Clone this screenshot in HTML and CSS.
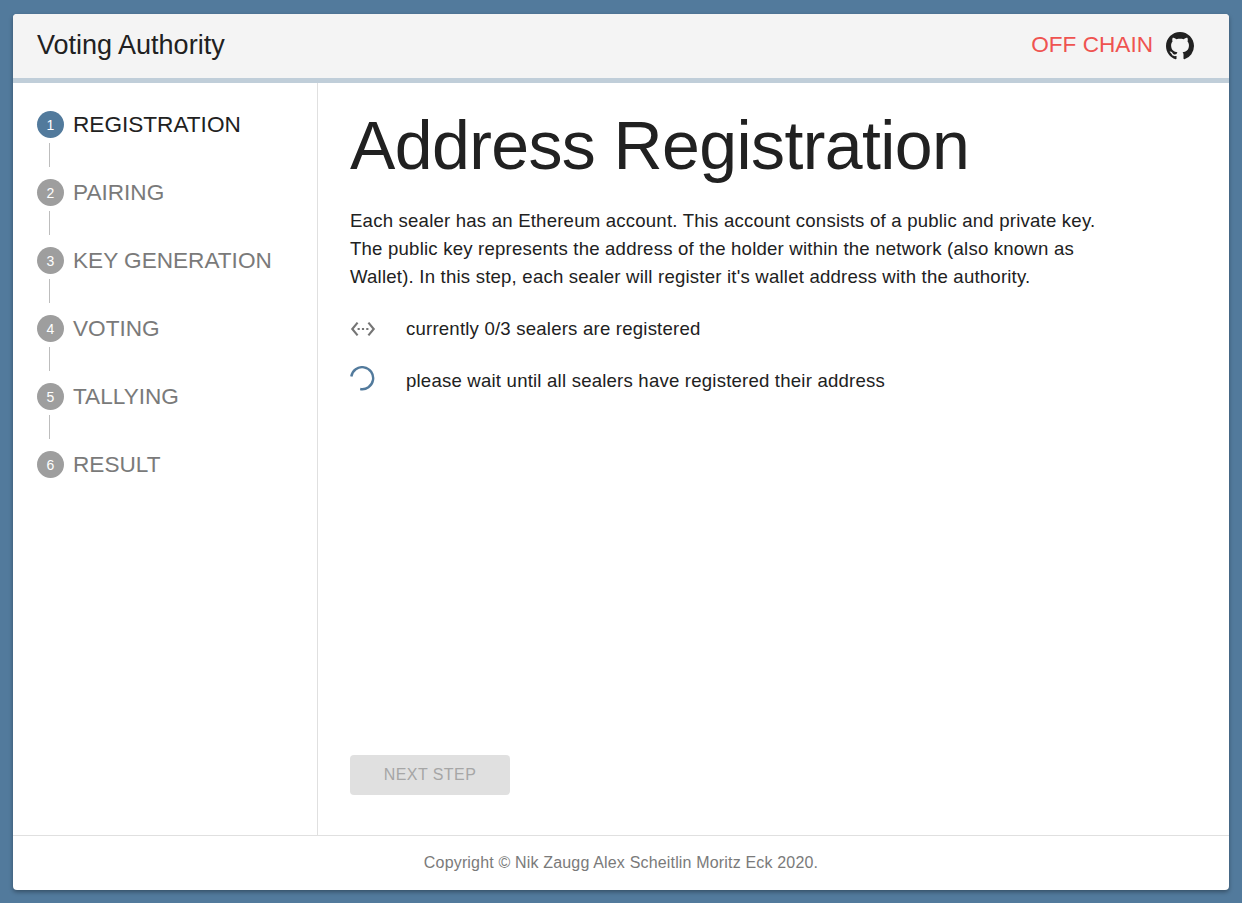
FILE: index.html
```html
<!DOCTYPE html>
<html lang="en">
<head>
   <meta charset="UTF-8">
   <meta name="viewport" content="width=device-width, initial-scale=1.0">
   <title>Voting Authority</title>
   <link rel="stylesheet" href="styles.css">
</head>
<body>
    <div class="card">
        <!-- Header -->
        <header class="header">
            <h1 class="header-title">Voting Authority</h1>
            <div class="header-right">
                <span class="chain-label">OFF CHAIN</span>
                <svg class="github-icon" viewBox="0 0 16 16" width="28" height="28" aria-hidden="true">
                    <path fill="#212121" fill-rule="evenodd" d="M8 0C3.58 0 0 3.58 0 8c0 3.54 2.29 6.53 5.47 7.59.4.07.55-.17.55-.38 0-.19-.01-.82-.01-1.49-2.01.37-2.53-.49-2.69-.94-.09-.23-.48-.94-.82-1.13-.28-.15-.68-.52-.01-.53.63-.01 1.08.58 1.23.82.72 1.21 1.87.87 2.33.66.07-.52.28-.87.51-1.07-1.78-.2-3.64-.89-3.64-3.95 0-.87.31-1.59.82-2.15-.08-.2-.36-1.02.08-2.12 0 0 .67-.21 2.2.82.64-.18 1.32-.27 2-.27.68 0 1.36.09 2 .27 1.53-1.04 2.2-.82 2.2-.82.44 1.1.16 1.92.08 2.12.51.56.82 1.27.82 2.15 0 3.07-1.87 3.75-3.65 3.95.29.25.54.73.54 1.48 0 1.07-.01 1.93-.01 2.2 0 .21.15.46.55.38A8.013 8.013 0 0016 8c0-4.42-3.58-8-8-8z"/>
                </svg>
            </div>
        </header>

        <div class="main">
            <!-- Steps -->
            <nav class="sidebar">
                <div class="step step-active"><span class="step-num">1</span><span class="step-label">REGISTRATION</span></div>
                <div class="step-line"></div>
                <div class="step"><span class="step-num">2</span><span class="step-label">PAIRING</span></div>
                <div class="step-line"></div>
                <div class="step"><span class="step-num">3</span><span class="step-label">KEY GENERATION</span></div>
                <div class="step-line"></div>
                <div class="step"><span class="step-num">4</span><span class="step-label">VOTING</span></div>
                <div class="step-line"></div>
                <div class="step"><span class="step-num">5</span><span class="step-label">TALLYING</span></div>
                <div class="step-line"></div>
                <div class="step"><span class="step-num">6</span><span class="step-label">RESULT</span></div>
            </nav>

            <!-- Step content -->
            <section class="content">
                <h2 class="content-title">Address Registration</h2>
                <p class="content-text">Each sealer has an Ethereum account. This account consists of a public and private key. The public key represents the address of the holder within the network (also known as Wallet). In this step, each sealer will register it's wallet address with the authority.</p>
                <ul class="status-list">
                    <li class="status-item">
                        <span class="status-icon">
                            <svg viewBox="0 0 24 24" width="26" height="26" aria-hidden="true">
                                <path fill="#757575" d="M7.77 6.76L6.23 5.48.82 12l5.41 6.52 1.54-1.28L3.42 12l4.35-5.24zM7 13h2v-2H7v2zm10-2h-2v2h2v-2zm-6 2h2v-2h-2v2zm6.77-7.52l-1.54 1.28L20.58 12l-4.35 5.24 1.54 1.28L23.18 12l-5.41-6.52z"/>
                            </svg>
                        </span>
                        <span>currently 0/3 sealers are registered</span>
                    </li>
                    <li class="status-item">
                        <span class="status-icon status-icon-top">
                            <svg class="spinner" viewBox="0 0 25 25" width="25" height="25" aria-hidden="true">
                                <path fill="none" stroke="#527a9c" stroke-width="2.4" d="M1.3 10.5A11 11 0 1 1 10.2 23"/>
                            </svg>
                        </span>
                        <span>please wait until all sealers have registered their address</span>
                    </li>
                </ul>
                <button class="next-button" type="button" disabled>NEXT STEP</button>
            </section>
        </div>

        <footer class="footer">Copyright © Nik Zaugg Alex Scheitlin Moritz Eck 2020.</footer>
    </div>
</body>
</html>
```

FILE: styles.css
```css
* {
    margin: 0;
    padding: 0;
    box-sizing: border-box;
}

body {
    font-family: "Liberation Sans", Arial, sans-serif;
    background-color: #527a9c;
    height: 100vh;
    padding: 14px 13px 13px;
    color: #212121;
}

.card {
    display: flex;
    flex-direction: column;
    height: 100%;
    background-color: #ffffff;
    border-radius: 4px;
    overflow: hidden;
    box-shadow: 0px 2px 4px rgba(0, 0, 0, 0.35);
}

.header {
    display: flex;
    justify-content: space-between;
    align-items: center;
    height: 69px;
    padding: 0 35px 1px 24px;
    background-color: #f4f4f4;
    border-bottom: 5px solid #c0ced9;
}

.header-title {
    font-size: 27px;
    font-weight: 400;
}

.header-right {
    display: flex;
    align-items: center;
    gap: 13px;
}

.chain-label {
    font-size: 22.6px;
    margin-bottom: 2px;
    color: #ef5350;
}

.main {
    display: flex;
    flex: 1;
    min-height: 0;
}

.sidebar {
    width: 305px;
    padding: 28px 24px 0;
    border-right: 1px solid #e0e0e0;
}

.step {
    display: flex;
    align-items: center;
    gap: 9px;
    height: 27px;
}

.step-num {
    display: flex;
    justify-content: center;
    align-items: center;
    width: 27px;
    height: 27px;
    border-radius: 50%;
    background-color: #9e9e9e;
    color: #ffffff;
    font-size: 14px;
}

.step-active .step-num {
    background-color: #527a9c;
}

.step-label {
    font-size: 22.6px;
    line-height: 27px;
    color: #7a7a7a;
}

.step-active .step-label {
    color: #212121;
}

.step-line {
    width: 1px;
    height: 24px;
    margin: 5px 0 12px 12px;
    background-color: #bdbdbd;
}

.content {
    display: flex;
    flex: 1;
    flex-direction: column;
    min-width: 0;
    padding: 24px 32px 40px;
}

.content-title {
    font-size: 68px;
    font-weight: 400;
    letter-spacing: -0.6px;
    line-height: 76px;
    margin-bottom: 24px;
}

.content-text {
    max-width: 760px;
    font-size: 18.6px;
    letter-spacing: 0.2px;
    line-height: 28px;
    margin-bottom: 20px;
}

.status-list {
    list-style-type: none;
    display: flex;
    flex-direction: column;
    gap: 16px;
    font-size: 18.6px;
    letter-spacing: 0.2px;
}

.status-item {
    display: flex;
    align-items: center;
    height: 36px;
}

.status-icon {
    display: flex;
    flex-shrink: 0;
    width: 56px;
}

.status-icon-top {
    align-self: flex-start;
    margin-top: 3px;
}

.next-button {
    width: 160px;
    height: 40px;
    margin-top: auto;
    border: none;
    border-radius: 4px;
    background-color: #e0e0e0;
    color: #a6a6a6;
    font-family: inherit;
    font-size: 16px;
    letter-spacing: 0.45px;
}

.footer {
    height: 55px;
    border-top: 1px solid #e0e0e0;
    display: flex;
    justify-content: center;
    align-items: center;
    font-size: 16px;
    letter-spacing: 0.17px;
    color: #7a7a7a;
}
```
